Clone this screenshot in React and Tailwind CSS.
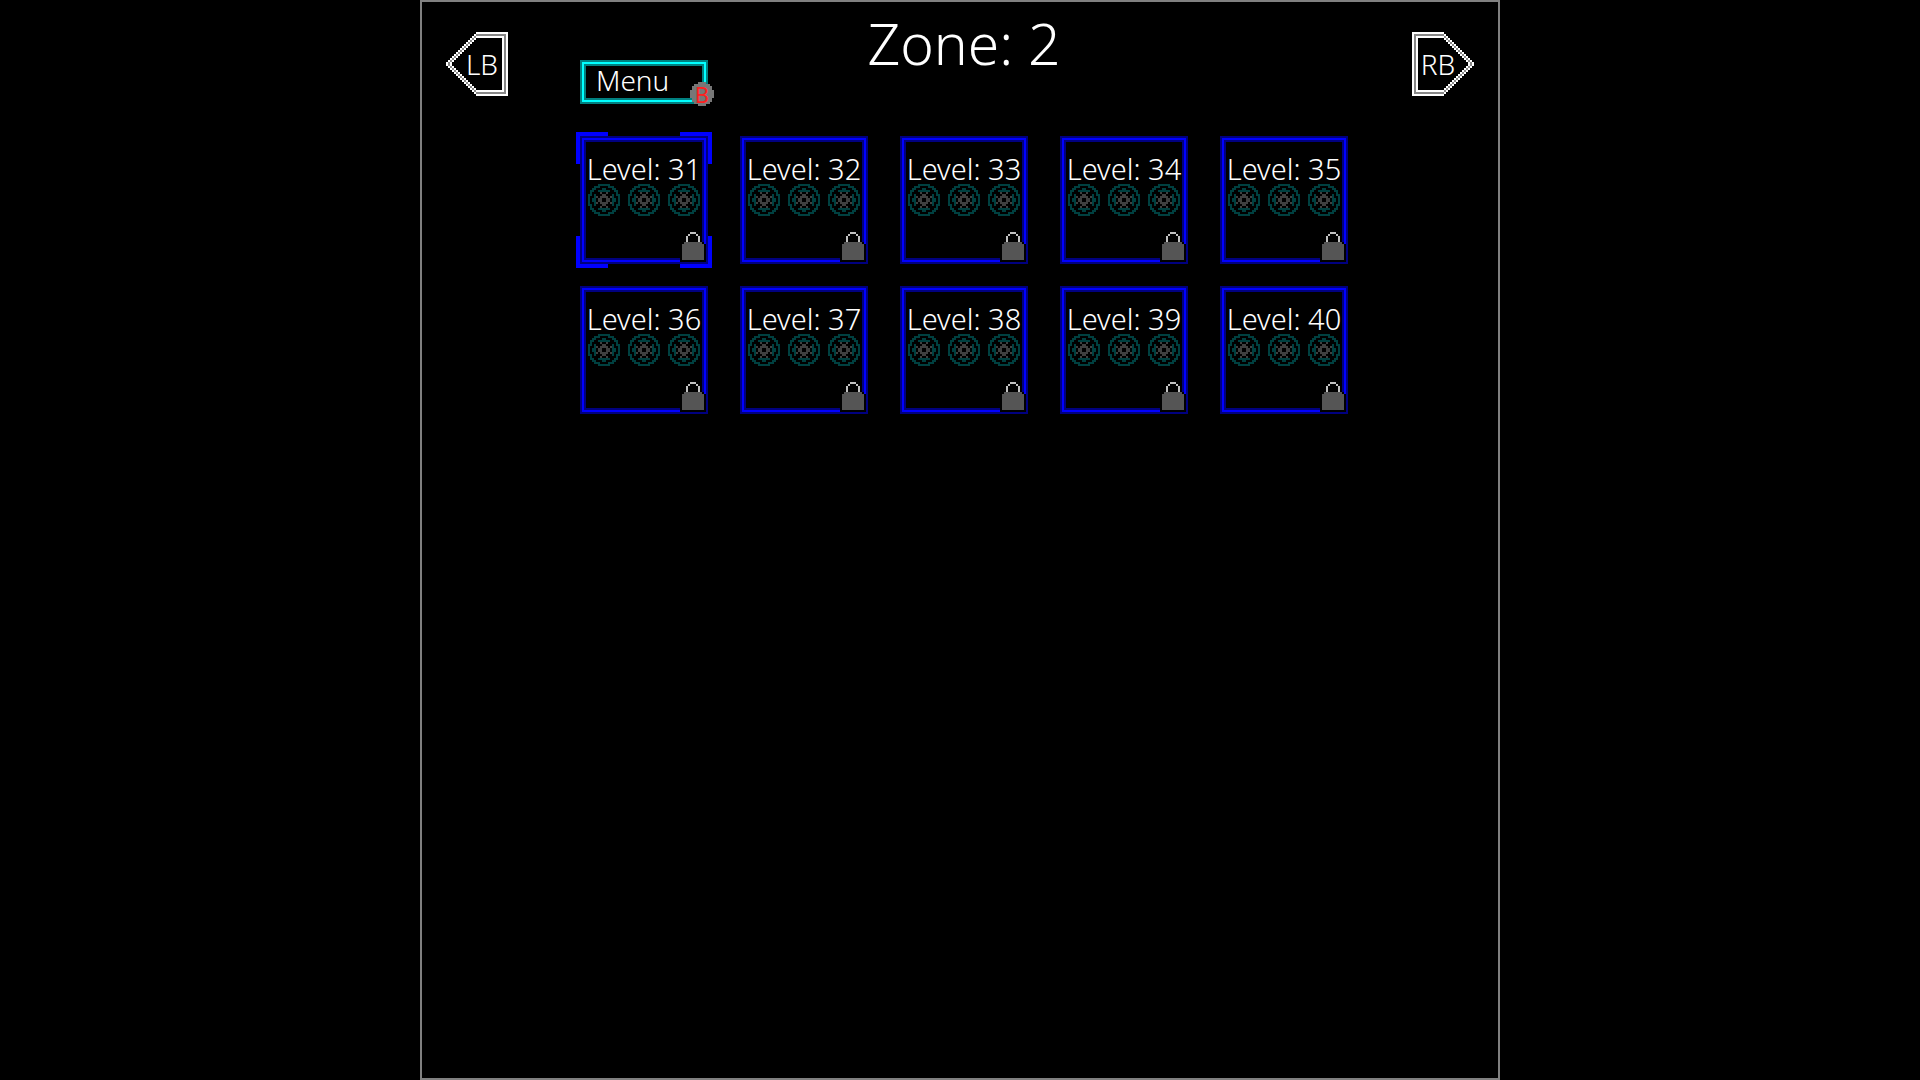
const palette = {
	t: "#004040",
	g: "#404040",
	l: "#555555",
	s: "#c0c0c0",
	c: "#777777",
	w: "#ffffff",
	m: "#888888",
	k: "#000000",
};

const reel = [
	".....tttttt.....",
	"...ttt....ttt...",
	"..tt...tt...tt..",
	".tt..tttttt..tt.",
	".t....g..g....t.",
	"tt.t...gg...t.tt",
	"t..tg.gggg.gt..t",
	"t.tt.gg..gg.tt.t",
	"t.tt.gg..gg.tt.t",
	"t..tg.gggg.gt..t",
	"tt.t...gg...t.tt",
	".t....g..g....t.",
	".tt..tttttt..tt.",
	"..tt...tt...tt..",
	"...ttt....ttt...",
	".....tttttt.....",
];

const lock = [
	".....sss.....",
	"....s...s....",
	"...s.....s...",
	"...s.....s...",
	"...s.....s...",
	"..lllllllllk.",
	"klllllllllllk",
	"klllllllllllk",
	"klllllllllllk",
	"klllllllllllk",
	"klllllllllllk",
	"klllllllllllk",
	"klllllllllllk",
	"klllllllllllk",
	"kkkkkkkkkkkkk",
];

const disc = [
	"....cccc....",
	"..cccccccc..",
	".cccccccccc.",
	".cccccccccc.",
	"cccccccccccc",
	"cccccccccccc",
	"cccccccccccc",
	"cccccccccccc",
	".cccccccccc.",
	".cccccccccc.",
	"..cccccccc..",
	"....cccc....",
];

// Left-pointing tag, built for the top half and mirrored down
const tagHalf = Array.from({ length: 16 }, (_, y) => {
	const start = 15 - y;
	const row = Array(31).fill(".");
	if (y === 0) row.fill("w", start);
	if (y === 1) row.fill("m", start);
	if (y === 2) row.fill("w", start);
	row[start] = "w";
	row[start + 1] = y === 0 ? "w" : "m";
	row[start + 2] = y === 1 ? "m" : "w";
	row[30] = "w";
	if (y > 0) row[29] = "m";
	if (y > 1) row[28] = "w";
	return row.join("");
});
const tag = [...tagHalf, ...[...tagHalf].reverse()];

const Sprite = ({ rows, className }) => (
	<svg
		viewBox={`0 0 ${rows[0].length} ${rows.length}`}
		shapeRendering="crispEdges"
		aria-hidden="true"
		className={className}
	>
		{rows.flatMap((row, y) =>
			[...row].map((cell, x) =>
				cell === "." ? null : (
					<rect
						key={`${x}-${y}`}
						x={x}
						y={y}
						width="1"
						height="1"
						fill={palette[cell]}
					/>
				)
			)
		)}
	</svg>
);

const Bumper = ({ label, flip }) => (
	<button
		type="button"
		className={`relative mt-[30px] h-16 w-[62px] shrink-0 text-[28px] leading-[62px] ${
			flip ? "pr-2.5" : "pl-2.5"
		}`}
	>
		<Sprite
			rows={tag}
			className={`absolute inset-0 h-full w-full ${flip ? "-scale-x-100" : ""}`}
		/>
		<span className="relative">{label}</span>
	</button>
);

const LevelCard = ({ level, selected }) => (
	<button
		type="button"
		className="relative flex h-32 flex-col items-center border-2 border-[#000080] pt-4 shadow-[inset_0_0_0_2px_#0000ff,inset_0_0_0_4px_#000080]"
	>
		<span className="text-[29px] leading-[30px] whitespace-nowrap">
			Level: {level}
		</span>
		<span className="flex gap-2">
			<Sprite rows={reel} className="size-8" />
			<Sprite rows={reel} className="size-8" />
			<Sprite rows={reel} className="size-8" />
		</span>
		{selected && (
			<>
				<span className="absolute -top-1.5 -left-1.5 size-8 border-t-4 border-l-4 border-[#0000ff]" />
				<span className="absolute -top-1.5 -right-1.5 size-8 border-t-4 border-r-4 border-[#0000ff]" />
				<span className="absolute -bottom-1.5 -left-1.5 size-8 border-b-4 border-l-4 border-[#0000ff]" />
				<span className="absolute -right-1.5 -bottom-1.5 size-8 border-r-4 border-b-4 border-[#0000ff]" />
			</>
		)}
		<Sprite
			rows={lock}
			className="absolute right-0 bottom-0 h-[30px] w-[26px]"
		/>
	</button>
);

const levels = [31, 32, 33, 34, 35, 36, 37, 38, 39, 40];

const App = () => {
	return (
		<div className="min-h-screen bg-black font-['Noto_Sans',sans-serif] font-light text-white">
			<div className="mx-auto flex aspect-square min-h-screen w-fit justify-between border-2 border-[#808080] px-6">
				<Bumper label="LB" />
				<main className="flex flex-1 flex-col items-center pl-2">
					<header className="grid grid-cols-[repeat(5,128px)] gap-x-8">
						<button
							type="button"
							className="relative mt-[58px] h-11 border-2 border-[#008080] pl-3.5 text-left shadow-[inset_0_0_0_2px_#00ffff,inset_0_0_0_4px_#008080]"
						>
							<span className="block h-full text-[28px] leading-[36px]">
								Menu
							</span>
							<span className="absolute -right-2 -bottom-1 size-6 text-center text-[22px] leading-6 font-normal text-[#ff2020]">
								<Sprite rows={disc} className="absolute inset-0 size-6" />
								<span className="relative">B</span>
							</span>
						</button>
						<h1 className="col-span-3 text-center text-[57px] leading-[82px]">
							Zone: 2
						</h1>
					</header>
					<div className="mt-8 grid grid-cols-[repeat(5,128px)] gap-x-8 gap-y-[22px]">
						{levels.map((level) => (
							<LevelCard key={level} level={level} selected={level === 31} />
						))}
					</div>
				</main>
				<Bumper label="RB" flip />
			</div>
		</div>
	);
};

export default App;
